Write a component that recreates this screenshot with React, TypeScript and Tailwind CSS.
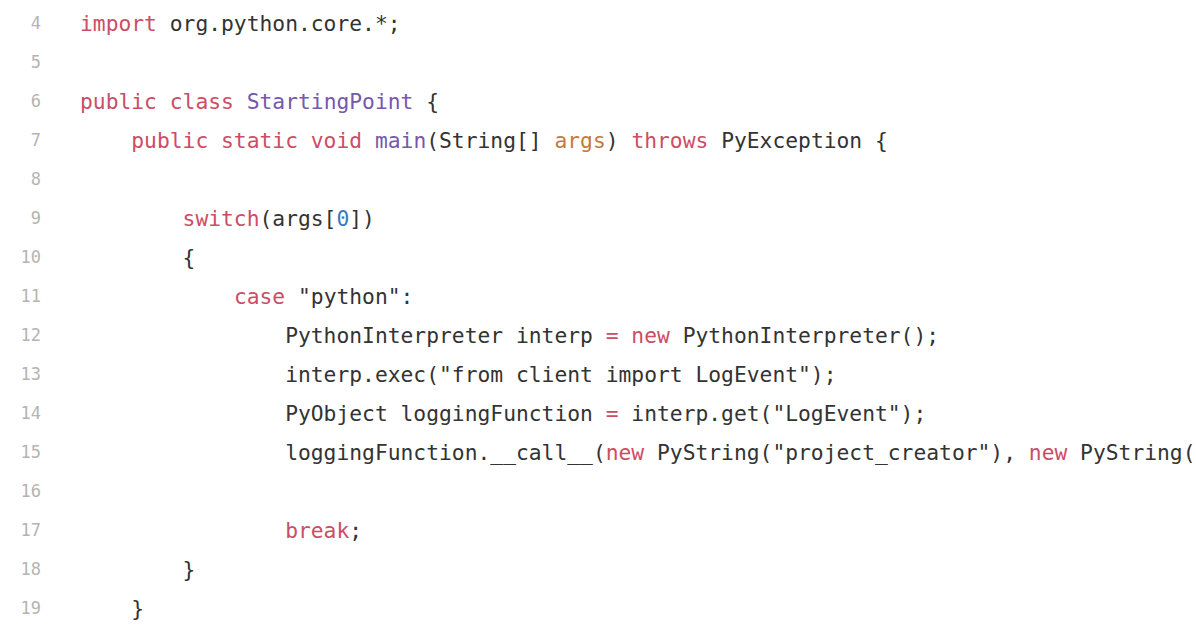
type Tok = [string, string?];

const K = "text-[#cc4d66]"; // keyword
const T = "text-[#7558ad]"; // type / function
const P = "text-[#c27a35]"; // param
const N = "text-[#3a78c2]"; // number

const lines: { n: number; indent: number; toks: Tok[] }[] = [
  { n: 4, indent: 0, toks: [["import", K], [" org.python.core.*;"]] },
  { n: 5, indent: 0, toks: [] },
  { n: 6, indent: 0, toks: [["public class", K], [" "], ["StartingPoint", T], [" {"]] },
  {
    n: 7,
    indent: 4,
    toks: [
      ["public static void", K],
      [" "],
      ["main", T],
      ["(String[] "],
      ["args", P],
      [") "],
      ["throws", K],
      [" PyException {"],
    ],
  },
  { n: 8, indent: 0, toks: [] },
  { n: 9, indent: 8, toks: [["switch", K], ["(args["], ["0", N], ["])"]] },
  { n: 10, indent: 8, toks: [["{"]] },
  { n: 11, indent: 12, toks: [["case", K], [' "python":']] },
  {
    n: 12,
    indent: 16,
    toks: [["PythonInterpreter interp "], ["= new", K], [" PythonInterpreter();"]],
  },
  { n: 13, indent: 16, toks: [['interp.exec("from client import LogEvent");']] },
  {
    n: 14,
    indent: 16,
    toks: [["PyObject loggingFunction "], ["=", K], [' interp.get("LogEvent");']],
  },
  {
    n: 15,
    indent: 16,
    toks: [
      ["loggingFunction.__call__("],
      ["new", K],
      [' PyString("project_creator"), '],
      ["new", K],
      [' PyString("")'],
    ],
  },
  { n: 16, indent: 0, toks: [] },
  { n: 17, indent: 16, toks: [["break", K], [";"]] },
  { n: 18, indent: 8, toks: [["}"]] },
  { n: 19, indent: 4, toks: [["}"]] },
];

export default function App() {
  return (
    <div className="w-[1196px] h-[628px] overflow-hidden bg-white pt-[4px] font-['DejaVu_Sans_Mono',monospace]">
      {lines.map((l) => (
        <div key={l.n} className="flex h-[39px] items-center whitespace-pre">
          <div className="w-[41px] shrink-0 text-right text-[17px] text-[#b4b4b4]">{l.n}</div>
          <div className="ml-[39px] text-[21.3px] text-[#333333]">
            {" ".repeat(l.indent)}
            {l.toks.map((t, i) => (
              <span key={i} className={t[1]}>
                {t[0]}
              </span>
            ))}
          </div>
        </div>
      ))}
    </div>
  );
}
